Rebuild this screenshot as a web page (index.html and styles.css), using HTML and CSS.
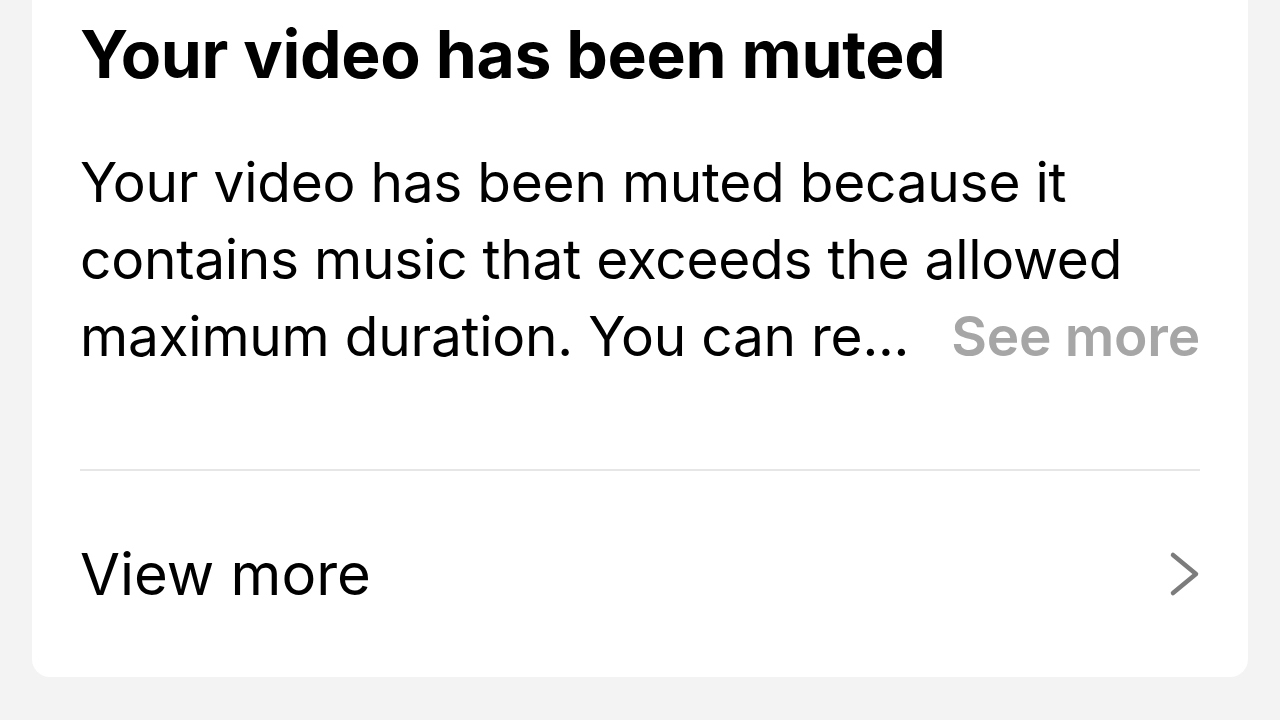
FILE: index.html
```html
<!doctype html>
<html>
  <head>
    <meta charset="utf-8">
    <title>Your video has been muted</title>
    <link rel="stylesheet" href="styles.css">
  </head>
  <body>
    <div class="card">
      <h1 class="title">Your video has been muted</h1>
      <p class="message">
        Your video has been muted because it<br>
        contains music that exceeds the allowed<br>
        <span class="lastline">
          <span>maximum duration. You can re...</span>
          <a class="seemore" href="#">See more</a>
        </span>
      </p>
      <div class="divider"></div>
      <a class="viewmore" href="#">
        <span>View more</span>
        <svg class="chevron" width="32" height="48" viewBox="0 0 32 48">
          <path d="M5 5 L28 24 L5 43" fill="none" stroke="#7c7c7c" stroke-width="4.5" stroke-linecap="round" stroke-linejoin="round"/>
        </svg>
      </a>
    </div>
  </body>
</html>
```

FILE: styles.css
```css
body {
  margin: 0;
  background-color: #f3f3f3;
  font-family: Inter, 'Noto Sans', sans-serif;
  color: #000;
}
.card {
  margin: 0 32px;
  padding: 14px 48px 0 48px;
  background-color: #fff;
  border-radius: 0 0 18px 18px;
  height: 663px;
  box-sizing: content-box;
}
.title {
  margin: 0;
  font-size: 66px;
  line-height: 80px;
  font-weight: 700;
  letter-spacing: -0.35px;
}
.message {
  margin: 50px 0 0 0;
  font-size: 55px;
  line-height: 77px;
  font-weight: 400;
  letter-spacing: -0.25px;
}
.lastline {
  display: flex;
  justify-content: space-between;
}
.seemore {
  color: #a6a6a6;
  font-weight: 600;
  text-decoration: none;
}
.divider {
  margin-top: 94px;
  height: 2px;
  background-color: #e6e6e6;
}
.viewmore {
  display: flex;
  justify-content: space-between;
  align-items: center;
  height: 206px;
  font-size: 58px;
  color: #000;
  text-decoration: none;
}
.chevron {
  margin-right: 0;
}
```
